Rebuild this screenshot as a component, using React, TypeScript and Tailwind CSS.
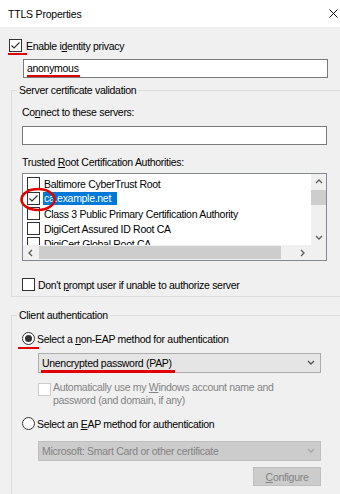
import React from 'react';

const CheckBox: React.FC<{ checked?: boolean; disabled?: boolean }> = ({ checked, disabled }) => (
  <span
    className={
      'flex-shrink-0 w-[13px] h-[13px] border flex items-center justify-center ' +
      (disabled ? 'border-[#cccccc] bg-white' : 'border-[#333333] bg-white')
    }
  >
    {checked && (
      <svg width="11" height="11" viewBox="0 0 11 11">
        <path d="M1.5 5.5 L4 8 L9.5 2.5" fill="none" stroke="#333333" strokeWidth="1.2" />
      </svg>
    )}
  </span>
);

const Radio: React.FC<{ checked?: boolean }> = ({ checked }) => (
  <span className="flex-shrink-0 w-[13px] h-[13px] rounded-full border border-[#333333] bg-white flex items-center justify-center">
    {checked && <span className="w-[7px] h-[7px] rounded-full bg-[#333333]" />}
  </span>
);

const Chevron: React.FC<{ dir: 'up' | 'down' | 'left' | 'right'; color?: string }> = ({ dir, color = '#606060' }) => {
  const paths = {
    up: 'M1 5 L4 2 L7 5',
    down: 'M1 2 L4 5 L7 2',
    left: 'M5 1 L2 4 L5 7',
    right: 'M2 1 L5 4 L2 7',
  };
  return (
    <svg width="8" height="8" viewBox="0 0 8 8">
      <path d={paths[dir]} fill="none" stroke={color} strokeWidth="1.4" />
    </svg>
  );
};

const Ak: React.FC<{ children: React.ReactNode }> = ({ children }) => (
  <span className="underline underline-offset-[1px] decoration-[1px]">{children}</span>
);

const certs = [
  { name: 'Baltimore CyberTrust Root', checked: false },
  { name: 'ca.example.net', checked: true, selected: true },
  { name: 'Class 3 Public Primary Certification Authority', checked: false },
  { name: 'DigiCert Assured ID Root CA', checked: false },
  { name: 'DigiCert Global Root CA', checked: false },
];

export default function App() {
  return (
    <div className="w-[340px] h-[494px] overflow-hidden bg-[#f0f0f0] text-black text-[10.5px] tracking-[-0.3px] leading-[14px] font-['Liberation_Sans',Arial,sans-serif]">
      {/* title bar */}
      <div className="h-[27px] bg-white flex items-center justify-between pl-[8px] pr-[2px]">
        <span className="text-[10.5px] tracking-[-0.2px]">TTLS Properties</span>
        <svg width="9" height="9" viewBox="0 0 9 9">
          <path d="M0.5 0.5 L8.5 8.5 M8.5 0.5 L0.5 8.5" stroke="#111" strokeWidth="1" />
        </svg>
      </div>

      <div className="pt-[12px]">
        <div className="relative flex items-center h-[13px] pl-[9px]">
          <CheckBox checked />
          <span className="ml-[4px]">
            Enable i<Ak>d</Ak>entity privacy
          </span>
          <span className="absolute left-[8px] top-[14px] w-[19px] h-[2px] bg-[#e00000]" />
        </div>

        <div className="relative mt-[7px] ml-[23px] w-[305px] h-[19px] border border-[#7a7a7a] bg-white pl-[3px] leading-[17px]">
          anonymous
          <span className="absolute left-[3px] top-[15px] w-[53px] h-[2px] bg-[#e00000]" />
        </div>

        {/* Server certificate validation */}
        <div className="mt-[12px] ml-[11px] w-[340px] border border-[#dcdcdc] pl-[10px] pb-[5px]">
          <div className="-mt-[8px] -ml-[5px] w-fit px-[2px] bg-[#f0f0f0]">Server certificate validation</div>

          <div className="mt-[8px]">
            Co<Ak>n</Ak>nect to these servers:
          </div>
          <div className="mt-[7px] w-[305px] h-[19px] border border-[#7a7a7a] bg-white" />

          <div className="mt-[10px]">
            Trusted <Ak>R</Ak>oot Certification Authorities:
          </div>

          <div className="relative mt-[4px] w-[305px] h-[88px] border border-[#828790] bg-white flex flex-col">
            <div className="flex h-[71px]">
              <div className="flex-1 overflow-hidden pt-[2px]">
                {certs.map((c) => (
                  <div key={c.name} className="flex items-center h-[15px] pl-[4px] whitespace-nowrap">
                    <CheckBox checked={c.checked} />
                    {c.selected ? (
                      <span className="ml-[3px] pl-[1px] pr-[6px] leading-[13px] bg-[#0078d7] text-white">{c.name}</span>
                    ) : (
                      <span className="ml-[4px]">{c.name}</span>
                    )}
                  </div>
                ))}
              </div>
              <div className="w-[15px] bg-[#f0f0f0] flex flex-col">
                <div className="h-[15px] flex items-center justify-center">
                  <Chevron dir="up" />
                </div>
                <div className="mt-[1px] h-[15px] bg-[#cdcdcd]" />
                <div className="flex-1" />
                <div className="h-[15px] flex items-center justify-center">
                  <Chevron dir="down" />
                </div>
              </div>
            </div>
            <div className="flex h-[15px] bg-[#f0f0f0]">
              <div className="w-[16px] flex items-center justify-center">
                <Chevron dir="left" />
              </div>
              <div className="w-[242px] my-[1px] bg-[#cdcdcd]" />
              <div className="flex-1" />
              <div className="w-[16px] flex items-center justify-center">
                <Chevron dir="right" />
              </div>
              <div className="w-[15px] bg-[#f0f0f0]" />
            </div>

            <svg className="absolute left-[-4px] top-[13px]" width="40" height="25" viewBox="0 0 40 25">
              <ellipse cx="19" cy="12.5" rx="16.5" ry="10.5" fill="none" stroke="#e00000" strokeWidth="2.5" />
            </svg>
          </div>

          <div className="mt-[17px] flex items-center h-[13px]">
            <CheckBox />
            <span className="ml-[3px]">
              Don't <Ak>p</Ak>rompt user if unable to authorize server
            </span>
          </div>
        </div>

        {/* Client authentication */}
        <div className="mt-[18px] ml-[11px] w-[340px] border border-[#dcdcdc] pl-[10px] pb-[20px]">
          <div className="-mt-[8px] -ml-[5px] w-fit px-[2px] bg-[#f0f0f0]">Client authentication</div>

          <div className="relative mt-[10px] flex items-center h-[13px]">
            <Radio checked />
            <span className="ml-[2px]">
              Select a <Ak>n</Ak>on-EAP method for authentication
            </span>
            <span className="absolute left-[-4px] top-[15px] w-[21px] h-[2px] bg-[#e00000]" />
          </div>

          <div className="ml-[16px] w-[283px]">
            <div className="relative mt-[8px] h-[20px] border border-[#adadad] bg-[#e5e5e5] flex items-center justify-between pl-[3px] pr-[5px]">
              <span>Unencrypted password (PAP)</span>
              <Chevron dir="down" color="#555" />
              <span className="absolute left-[2px] top-[16px] w-[134px] h-[3px] bg-[#e00000]" />
            </div>

            <div className="mt-[8px] flex items-start text-[#838383] leading-[13px]">
              <span className="mt-[2px]">
                <CheckBox disabled />
              </span>
              <span className="ml-[2px]">
                Automatically use my <Ak>W</Ak>indows account name and
                <br />
                password (and domain, if any)
              </span>
            </div>
          </div>

          <div className="mt-[10px] flex items-center h-[13px]">
            <Radio />
            <span className="ml-[2px]">
              Select an <Ak>E</Ak>AP method for authentication
            </span>
          </div>

          <div className="ml-[16px] w-[283px] flex flex-col">
            <div className="mt-[11px] h-[20px] border border-[#bfbfbf] bg-[#cccccc] flex items-center justify-between pl-[3px] pr-[5px] text-[#838383]">
              <span>Microsoft: Smart Card or other certificate</span>
              <Chevron dir="down" color="#a8a8a8" />
            </div>
            <div className="mt-[6px] self-end w-[68px] h-[19px] border border-[#bfbfbf] bg-[#cccccc] flex items-center justify-center text-[#838383]">
              <span>
                <Ak>C</Ak>onfigure
              </span>
            </div>
          </div>
        </div>
      </div>
    </div>
  );
}
